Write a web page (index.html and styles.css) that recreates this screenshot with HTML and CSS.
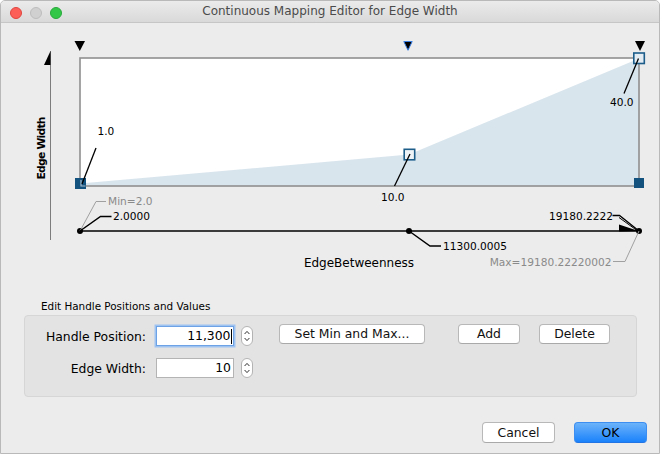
FILE: index.html
```html
<!DOCTYPE html>
<html>
<head>
<meta charset="utf-8">
<title>Continuous Mapping Editor for Edge Width</title>
<link rel="stylesheet" href="styles.css">
</head>
<body>
<div class="window">
  <div class="titlebar">
    <div class="lights">
      <span class="light red"></span>
      <span class="light gray"></span>
      <span class="light green"></span>
    </div>
    <div class="title">Continuous Mapping Editor for Edge Width</div>
    <div></div>
  </div>

  <svg class="chart" width="658" height="270" viewBox="1 23 658 270" xmlns="http://www.w3.org/2000/svg">
    <!-- handle markers above plot -->
    <polygon points="74.5,41 85,41 79.8,51" fill="#000"/>
    <polygon points="403.8,41.5 412.2,41.5 408,50.3" fill="#000" stroke="#3a80e4" stroke-width="1"/>
    <polygon points="635,41 645,41 640,51" fill="#000"/>

    <!-- plot area -->
    <rect x="80" y="58" width="559" height="128" fill="#fff"/>
    <polygon points="80,183.5 409,154.5 639,58.5 639,186 80,186" fill="#d9e5ed"/>
    <rect x="80" y="58" width="559" height="128" fill="none" stroke="#8f8f8f" stroke-width="1.6"/>

    <!-- y axis -->
    <line x1="50.5" y1="51" x2="50.5" y2="240" stroke="#7d7d7d" stroke-width="1"/>
    <polygon points="50.5,51 50.5,65 44,65" fill="#000"/>
    <text class="axis-title" transform="translate(44.8 148) rotate(-90)" text-anchor="middle" textLength="63">Edge Width</text>

    <!-- handles -->
    <rect x="75" y="178" width="11" height="11" fill="#13527e"/>
    <polyline points="81,180 81,186 85.5,186" fill="none" stroke="#a9bccb" stroke-width="1.2"/>
    <rect x="634" y="178" width="10" height="10" fill="#13527e"/>
    <rect x="404.2" y="149.3" width="10.5" height="10.5" fill="#eef3f7" stroke="#1c5d8a" stroke-width="1.6"/>
    <rect x="633.8" y="53" width="10.5" height="10.5" fill="#e3ecf2" stroke="#1c5d8a" stroke-width="1.6"/>

    <!-- value labels -->
    <line x1="96" y1="148" x2="82" y2="184" stroke="#000" stroke-width="1.3"/>
    <text x="97.5" y="134.5">1.0</text>
    <line x1="410" y1="154" x2="394.5" y2="186" stroke="#000" stroke-width="1.3"/>
    <text x="381" y="201">10.0</text>
    <line x1="638.5" y1="58.5" x2="624" y2="93.5" stroke="#000" stroke-width="1.3"/>
    <text x="610" y="106">40.0</text>

    <!-- x axis -->
    <line x1="80" y1="231" x2="639" y2="231" stroke="#000" stroke-width="1.3"/>
    <polygon points="619,224.5 619,231.5 638.5,231" fill="#000"/>
    <circle cx="80" cy="231" r="3" fill="#000"/>
    <circle cx="409" cy="231" r="3" fill="#000"/>
    <circle cx="639" cy="231" r="3" fill="#000"/>

    <polyline points="80,231 96,201.5 106,201.5" fill="none" stroke="#a0a0a0" stroke-width="1"/>
    <text class="muted" x="108" y="205">Min=2.0</text>
    <polyline points="80,231 100.5,216.5 111.5,216.5" fill="none" stroke="#000" stroke-width="1.5"/>
    <text x="113" y="219.5">2.0000</text>

    <polyline points="409,231 430,246 441,246" fill="none" stroke="#000" stroke-width="1.5"/>
    <text x="443" y="250">11300.0005</text>

    <polyline points="612.5,215.5 619.5,215.5 639,231" fill="none" stroke="#000" stroke-width="1.3"/>
    <line x1="619" y1="217.5" x2="637" y2="230.5" stroke="#000" stroke-width="1"/>
    <text x="613" y="219.5" text-anchor="end">19180.2222</text>

    <polyline points="613,261.5 625,261.5 639,231" fill="none" stroke="#a0a0a0" stroke-width="1"/>
    <text class="muted" x="611.5" y="265.5" text-anchor="end">Max=19180.22220002</text>

    <text class="axis-label" x="359" y="266.5" text-anchor="middle">EdgeBetweenness</text>
  </svg>

  <div class="section-title">Edit Handle Positions and Values</div>

  <div class="panel">
    <div class="row row-first">
      <label class="lbl">Handle Position:</label>
      <div class="field focused"><span>11,300</span><span class="caret"></span></div>
      <span class="spinner">
        <svg width="12" height="20" viewBox="0 0 12 20"><rect x="0.5" y="0.5" width="11" height="19" rx="5.5" fill="#fff" stroke="#b3b3b3"/><path d="M3.6 8 L6 5.4 L8.4 8" fill="none" stroke="#333" stroke-width="1"/><path d="M3.6 12 L6 14.6 L8.4 12" fill="none" stroke="#333" stroke-width="1"/></svg>
      </span>
      <button class="btn btn-minmax">Set Min and Max...</button>
      <button class="btn btn-add">Add</button>
      <button class="btn btn-delete">Delete</button>
    </div>
    <div class="row row-second">
      <label class="lbl">Edge Width:</label>
      <div class="field"><span>10</span></div>
      <span class="spinner">
        <svg width="12" height="20" viewBox="0 0 12 20"><rect x="0.5" y="0.5" width="11" height="19" rx="5.5" fill="#fff" stroke="#b3b3b3"/><path d="M3.6 8 L6 5.4 L8.4 8" fill="none" stroke="#333" stroke-width="1"/><path d="M3.6 12 L6 14.6 L8.4 12" fill="none" stroke="#333" stroke-width="1"/></svg>
      </span>
    </div>
  </div>

  <div class="footer">
    <button class="btn btn-cancel">Cancel</button>
    <button class="btn btn-ok">OK</button>
  </div>
</div>
</body>
</html>
```

FILE: styles.css
```css
* {
  box-sizing: border-box;
}

html,
body {
  margin: 0;
  padding: 0;
  background: #ffffff;
}

body {
  width: 660px;
  height: 455px;
  overflow: hidden;
  font-family: "DejaVu Sans", sans-serif;
  color: #000;
}

.window {
  width: 660px;
  height: 454px;
  border: 1px solid #b9b9b9;
  border-radius: 5px 5px 0 0;
  background: #ececec;
  display: flex;
  flex-direction: column;
  overflow: hidden;
}

/* title bar */
.titlebar {
  flex: none;
  height: 22px;
  border-bottom: 1px solid #c6c6c6;
  background: linear-gradient(#ebebeb, #d9d9d9);
  display: grid;
  grid-template-columns: 1fr auto 1fr;
}

.lights {
  display: flex;
  align-items: center;
  gap: 8px;
  padding-left: 8.5px;
  padding-top: 2px;
}

.light {
  width: 12px;
  height: 12px;
  border-radius: 50%;
  display: block;
}

.light.red {
  background: #fc5f57;
  border: 1px solid #e0443e;
}

.light.gray {
  background: #d0d0d0;
  border: 1px solid #bdbdbd;
}

.light.green {
  background: #33c748;
  border: 1px solid #27a93a;
}

.title {
  font-size: 12px;
  line-height: 21px;
  color: #4b4b4b;
  white-space: nowrap;
}

/* chart */
.chart {
  display: block;
  flex: none;
}

.chart text {
  font-family: "DejaVu Sans", sans-serif;
  font-size: 10.6px;
  fill: #000;
}

.chart text.muted {
  fill: #8a8a8a;
}

.chart text.axis-title {
  font-weight: bold;
  font-size: 10.8px;
}

.chart text.axis-label {
  font-size: 12px;
}

/* editor panel */
.section-title {
  flex: none;
  font-size: 10.4px;
  line-height: 13px;
  margin: 7px 0 0 40px;
}

.panel {
  flex: none;
  margin: 2px 0 0 23px;
  width: 613px;
  height: 82px;
  border: 1px solid #d6d6d6;
  border-radius: 4px;
  background: #e3e3e3;
  padding-top: 9px;
}

.row {
  display: flex;
  align-items: center;
}

.row-first {
  height: 22px;
}

.row-second {
  height: 20px;
  margin-top: 11px;
}

.lbl {
  width: 121px;
  text-align: right;
  font-size: 12.4px;
  margin-right: 10px;
  white-space: nowrap;
}

.field {
  width: 78px;
  height: 20px;
  background: #fff;
  border: 1px solid #b4b4b4;
  font-size: 12.4px;
  line-height: 18px;
  display: flex;
  justify-content: flex-end;
  align-items: center;
  padding-right: 2px;
}

.field.focused {
  border-color: #6ea2e6;
  box-shadow: 0 0 0 1.5px #9fc3f1;
  padding-right: 1px;
}

.caret {
  display: inline-block;
  width: 1px;
  height: 15px;
  background: #000;
  margin-left: 0.5px;
}

.spinner {
  display: block;
  width: 12px;
  height: 20px;
  margin-left: 6.5px;
}

.spinner svg {
  display: block;
}

.btn {
  font-family: "DejaVu Sans", sans-serif;
  font-size: 12.4px;
  color: #111;
  background: #fff;
  border: 1px solid #b8b8b8;
  border-bottom-color: #a9a9a9;
  border-radius: 4px;
  height: 20px;
  padding: 0;
  margin: 0;
  line-height: 18px;
  text-align: center;
}

.btn-minmax {
  width: 146px;
  margin-left: 26.5px;
  align-self: flex-start;
  margin-top: -1px;
}

.btn-add {
  width: 62px;
  margin-left: 33px;
  align-self: flex-start;
  margin-top: -1px;
}

.btn-delete {
  width: 71px;
  margin-left: 19px;
  align-self: flex-start;
  margin-top: -1px;
}

/* footer */
.footer {
  flex: none;
  display: flex;
  justify-content: flex-end;
  gap: 19px;
  margin-top: 25px;
  padding-right: 12px;
}

.btn-cancel,
.btn-ok {
  width: 73px;
  height: 21px;
  line-height: 19px;
}

.btn-ok {
  background: linear-gradient(#6cb3fa, #1b82fb);
  border: 1px solid #3c8ef0;
  border-bottom-color: #2273e3;
  color: #000;
}
```
